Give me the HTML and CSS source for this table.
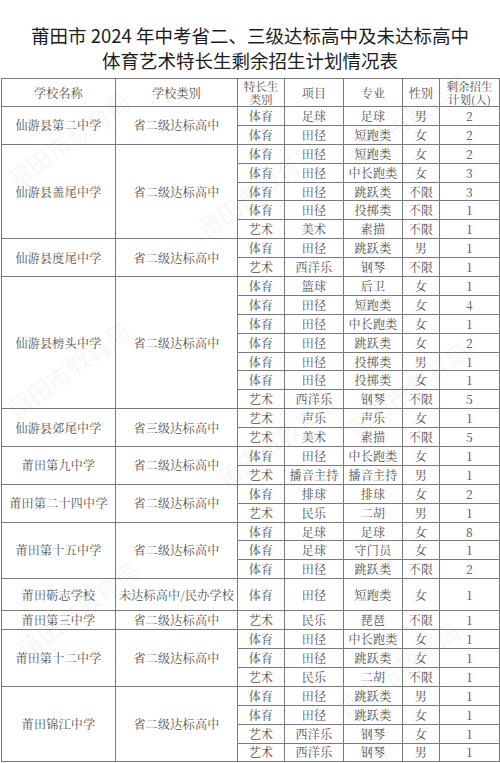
FILE: index.html
```html
<!DOCTYPE html>
<html lang="zh-CN">
<head>
<meta charset="utf-8">
<title>剩余招生计划情况表</title>
<link rel="stylesheet" href="styles.css">
</head>
<body>
<div class="page">
  <h1 class="title">莆田市 2024 年中考省二、三级达标高中及未达标高中<br>体育艺术特长生剩余招生计划情况表</h1>
  <table class="plan">
    <colgroup>
      <col class="c-name"><col class="c-type"><col class="c-cat"><col class="c-item"><col class="c-major"><col class="c-sex"><col class="c-num">
    </colgroup>
    <thead>
      <tr class="head">
        <th>学校名称</th><th>学校类别</th><th class="two">特长生<br>类别</th><th>项目</th><th>专业</th><th>性别</th><th class="two">剩余招生<br>计划(人)</th>
      </tr>
    </thead>
    <tbody>
      <tr><td rowspan="2">仙游县第二中学</td><td rowspan="2">省二级达标高中</td><td>体育</td><td>足球</td><td>足球</td><td>男</td><td>2</td></tr>
      <tr><td>体育</td><td>田径</td><td>短跑类</td><td>女</td><td>2</td></tr>

      <tr><td rowspan="5">仙游县盖尾中学</td><td rowspan="5">省二级达标高中</td><td>体育</td><td>田径</td><td>短跑类</td><td>女</td><td>2</td></tr>
      <tr><td>体育</td><td>田径</td><td>中长跑类</td><td>女</td><td>3</td></tr>
      <tr><td>体育</td><td>田径</td><td>跳跃类</td><td>不限</td><td>3</td></tr>
      <tr><td>体育</td><td>田径</td><td>投掷类</td><td>不限</td><td>1</td></tr>
      <tr><td>艺术</td><td>美术</td><td>素描</td><td>不限</td><td>1</td></tr>

      <tr><td rowspan="2">仙游县度尾中学</td><td rowspan="2">省二级达标高中</td><td>体育</td><td>田径</td><td>跳跃类</td><td>男</td><td>1</td></tr>
      <tr><td>艺术</td><td>西洋乐</td><td>钢琴</td><td>不限</td><td>1</td></tr>

      <tr><td rowspan="7">仙游县榜头中学</td><td rowspan="7">省二级达标高中</td><td>体育</td><td>篮球</td><td>后卫</td><td>女</td><td>1</td></tr>
      <tr><td>体育</td><td>田径</td><td>短跑类</td><td>女</td><td>4</td></tr>
      <tr><td>体育</td><td>田径</td><td>中长跑类</td><td>女</td><td>1</td></tr>
      <tr><td>体育</td><td>田径</td><td>跳跃类</td><td>女</td><td>2</td></tr>
      <tr><td>体育</td><td>田径</td><td>投掷类</td><td>男</td><td>1</td></tr>
      <tr><td>体育</td><td>田径</td><td>投掷类</td><td>女</td><td>1</td></tr>
      <tr><td>艺术</td><td>西洋乐</td><td>钢琴</td><td>不限</td><td>5</td></tr>

      <tr><td rowspan="2">仙游县郊尾中学</td><td rowspan="2">省三级达标高中</td><td>艺术</td><td>声乐</td><td>声乐</td><td>女</td><td>1</td></tr>
      <tr><td>艺术</td><td>美术</td><td>素描</td><td>不限</td><td>5</td></tr>

      <tr><td rowspan="2">莆田第九中学</td><td rowspan="2">省二级达标高中</td><td>体育</td><td>田径</td><td>中长跑类</td><td>女</td><td>1</td></tr>
      <tr><td>艺术</td><td>播音主持</td><td>播音主持</td><td>男</td><td>1</td></tr>

      <tr><td rowspan="2">莆田第二十四中学</td><td rowspan="2">省二级达标高中</td><td>体育</td><td>排球</td><td>排球</td><td>女</td><td>2</td></tr>
      <tr><td>艺术</td><td>民乐</td><td>二胡</td><td>男</td><td>1</td></tr>

      <tr><td rowspan="3">莆田第十五中学</td><td rowspan="3">省二级达标高中</td><td>体育</td><td>足球</td><td>足球</td><td>女</td><td>8</td></tr>
      <tr><td>体育</td><td>足球</td><td>守门员</td><td>女</td><td>1</td></tr>
      <tr><td>体育</td><td>田径</td><td>跳跃类</td><td>不限</td><td>2</td></tr>

      <tr class="tall"><td>莆田砺志学校</td><td>未达标高中/民办学校</td><td>体育</td><td>田径</td><td>短跑类</td><td>女</td><td>1</td></tr>

      <tr><td>莆田第三中学</td><td>省二级达标高中</td><td>艺术</td><td>民乐</td><td>琵琶</td><td>不限</td><td>1</td></tr>

      <tr><td rowspan="3">莆田第十二中学</td><td rowspan="3">省二级达标高中</td><td>体育</td><td>田径</td><td>中长跑类</td><td>女</td><td>1</td></tr>
      <tr><td>体育</td><td>田径</td><td>跳跃类</td><td>女</td><td>1</td></tr>
      <tr><td>艺术</td><td>民乐</td><td>二胡</td><td>不限</td><td>1</td></tr>

      <tr><td rowspan="4">莆田锦江中学</td><td rowspan="4">省二级达标高中</td><td>体育</td><td>田径</td><td>跳跃类</td><td>男</td><td>1</td></tr>
      <tr><td>体育</td><td>田径</td><td>跳跃类</td><td>女</td><td>1</td></tr>
      <tr><td>艺术</td><td>西洋乐</td><td>钢琴</td><td>女</td><td>1</td></tr>
      <tr><td>艺术</td><td>西洋乐</td><td>钢琴</td><td>男</td><td>1</td></tr>
    </tbody>
  </table>

  <div class="watermarks" aria-hidden="true">
    <span class="wm w1">莆田市教育局</span>
    <span class="wm w2">莆田市教育局</span>
    <span class="wm w3">莆田市教育局</span>
    <span class="wm w4">莆田市教育局</span>
    <span class="wm w5">莆田市教育局</span>
    <span class="wm w6">莆田市教育局</span>
    <span class="wm w7">莆田市教育局</span>
    <span class="wm w8">莆田市教育局</span>
  </div>
</div>
</body>
</html>
```

FILE: styles.css
```css
html, body {
  margin: 0;
  padding: 0;
  background: #ffffff;
}

.page {
  position: relative;
  width: 500px;
  height: 763px;
  overflow: hidden;
}

.title {
  margin: 0;
  padding-top: 23px;
  font-family: "Noto Sans CJK SC", "Noto Sans", sans-serif;
  font-weight: 400;
  font-size: 18.5px;
  line-height: 25px;
  color: #1c1c1c;
  text-align: center;
}

.plan {
  margin: 5px 0 0 1px;
  width: 498px;
  table-layout: fixed;
  border-collapse: collapse;
  font-family: "Noto Serif CJK SC", "Noto Sans CJK SC", serif;
  font-size: 12px;
  color: #505050;
}

.c-name { width: 114px; }
.c-type { width: 122px; }
.c-cat { width: 47px; }
.c-item { width: 59px; }
.c-major { width: 59px; }
.c-sex { width: 37px; }
.c-num { width: 60px; }

.plan th,
.plan td {
  border: 1px solid #7a7a7a;
  padding: 0;
  text-align: center;
  vertical-align: middle;
  font-weight: 400;
  white-space: nowrap;
  line-height: 14px;
  letter-spacing: 0.3px;
}

.plan .head th {
  height: 27px;
}

.plan th.two {
  line-height: 12.5px;
  font-size: 11.5px;
  letter-spacing: 0;
}

.plan tbody tr {
  height: 18.9px;
}

.plan tbody tr.tall {
  height: 32px;
}

.watermarks {
  position: absolute;
  inset: 0;
  pointer-events: none;
}

.wm {
  position: absolute;
  font-family: "Noto Sans CJK SC", sans-serif;
  font-size: 24px;
  line-height: 24px;
  color: rgba(120, 120, 120, 0.07);
  transform: rotate(-36deg);
  transform-origin: left center;
  white-space: nowrap;
}

.w1 { left: 10px; top: 170px; }
.w2 { left: 200px; top: 220px; }
.w3 { left: 350px; top: 150px; }
.w4 { left: 10px; top: 400px; }
.w5 { left: 220px; top: 470px; }
.w6 { left: 350px; top: 420px; }
.w7 { left: 20px; top: 640px; }
.w8 { left: 340px; top: 700px; }
```
